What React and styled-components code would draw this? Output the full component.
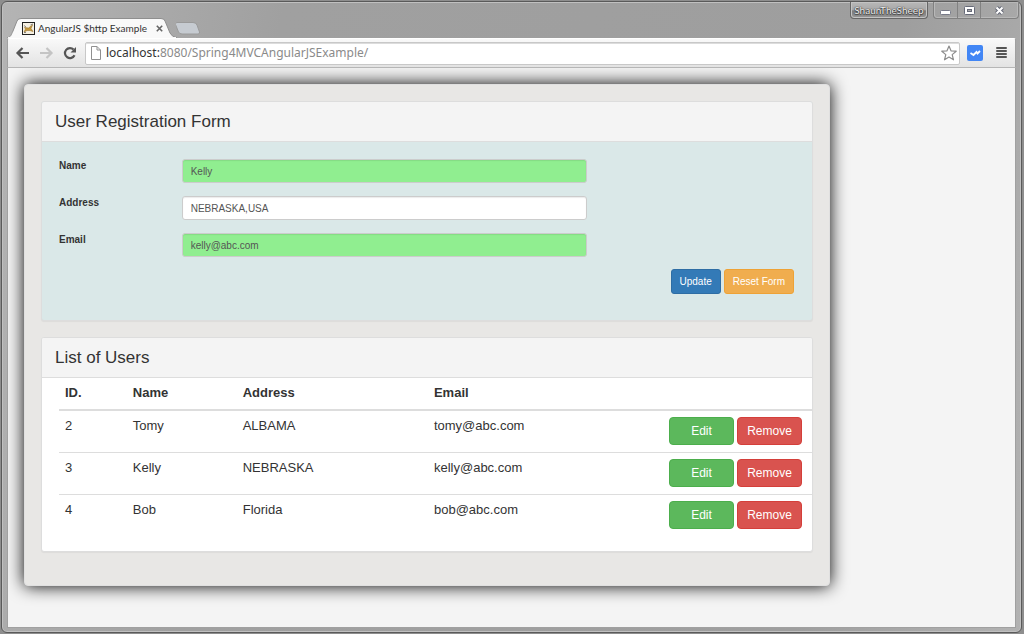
import React, { useState } from 'react';
import styled, { createGlobalStyle } from 'styled-components';

const GlobalStyle = createGlobalStyle`
    * {
        box-sizing: border-box;
    }
    body {
        margin: 0;
        background: #8e8e8e;
        color: #333;
        font-family: 'Liberation Sans', Arial, sans-serif;
    }
    button,
    input {
        font-family: inherit;
    }
`;

const CHROME_FONT = "Lato, 'Noto Sans', sans-serif";
const URL_FONT = "'Noto Sans', 'Open Sans', sans-serif";

/* browser window */

const Screen = styled.div`
    display: flex;
    min-height: 100vh;
    padding: 1px 2px 1px 1px;
`;

const Window = styled.div`
    flex: 1;
    min-width: 0;
    display: flex;
    flex-direction: column;
    padding: 0 5px 4px;
    border: 1px solid #5a5a5a;
    border-radius: 6px;
    background: linear-gradient(100deg, #b4b4b4 0, #a0a0a0 25%, #9e9e9e 80%, #b2b2b2 100%);
    box-shadow: inset 0 0 0 1px #c0c0c0;
`;

const TitleBar = styled.div`
    display: flex;
    justify-content: space-between;
    height: 36px;
`;

const Tabs = styled.div`
    display: flex;
    align-items: flex-end;
`;

const Tab = styled.div`
    position: relative;
    display: flex;
    align-items: center;
    width: 169px;
    height: 20px;
    padding: 0 11px 0 15px;
    font: 10px/20px ${CHROME_FONT};
    white-space: nowrap;
`;

const TabShape = styled.svg`
    position: absolute;
    top: 0;
    left: 0;
`;

const TabTitle = styled.span`
    position: relative;
    flex: 1;
    margin-left: 3px;
`;

const TabIcon = styled.svg`
    position: relative;
`;

const TabClose = styled.button`
    position: relative;
    display: flex;
    padding: 2px;
    border: 0;
    background: none;
`;

const NewTab = styled.button`
    height: 20px;
    padding: 0;
    border: 0;
    background: none;
`;

const Caption = styled.div`
    display: flex;
    gap: 5px;
    height: 17px;
    margin-right: -3px;
`;

const Profile = styled.button`
    width: 78px;
    padding: 0;
    border: 1px solid #666;
    border-top: 0;
    border-radius: 0 0 4px 4px;
    background: linear-gradient(#b8b8b8 0, #a8a8a8 50%, #7c7c7c 55%, #989898 100%);
    box-shadow: inset 0 0 0 1px #c4c4c4;
    color: #eee;
    font: 10px/17px ${CHROME_FONT};
    text-shadow: 0 0 1px #333, 0 0 1px #333, 0 1px 1px #444;
`;

const WindowButtons = styled.div`
    display: flex;
    border: 1px solid #808080;
    border-top: 0;
    border-radius: 0 0 4px 4px;
    box-shadow: inset 0 0 0 1px #b8b8b8;
`;

const WindowButton = styled.button`
    display: flex;
    align-items: center;
    justify-content: center;
    width: ${props => props.$wide ? '38px' : '23px'};
    padding: 0;
    border: 0;
    background: none;

    & + & {
        border-left: 1px solid #828282;
    }
`;

const Toolbar = styled.div`
    display: flex;
    align-items: center;
    gap: 7px;
    height: 30px;
    padding: 0 8px 0 7px;
    border: 1px solid #a0a0a0;
    border-top-color: #fff;
    border-bottom-color: #b6b6b6;
    border-radius: 2px 2px 0 0;
    background: linear-gradient(#f9f9f9, #e3e3e3);
`;

const ToolButton = styled.button`
    display: flex;
    padding: 0;
    border: 0;
    background: none;
`;

const NavButtons = styled.div`
    display: flex;
    gap: 8px;
    padding-right: 1px;
`;

const AddressBar = styled.div`
    flex: 1;
    display: flex;
    align-items: center;
    gap: 4px;
    height: 23px;
    padding: 0 2px 0 4px;
    border: 1px solid #c8c8c8;
    border-radius: 2px;
    background: #fff;
    box-shadow: inset 0 1px 0 #dcdcdc;
`;

const Url = styled.div`
    flex: 1;
    color: #8a8a8a;
    font: 12px/20px ${URL_FONT};

    b {
        color: #333;
        font-weight: normal;
    }
`;

const Actions = styled.div`
    display: flex;
    gap: 12px;
`;

const Viewport = styled.main`
    flex: 1;
    overflow: hidden;
    padding: 16px;
    border: 1px solid #a0a0a0;
    border-top: 0;
    background: #f4f4f4;
`;

/* page */

const Card = styled.div`
    width: calc(80% + 26px);
    padding: 16px 16px 33px;
    border: 1px solid #e0e0e0;
    border-radius: 4px;
    background: #e8e7e5;
    box-shadow: 0 0 17px #000;
`;

const Panel = styled.section`
    border: 1px solid #ddd;
    border-radius: 3px;
    background: ${props => props.$tinted ? '#dae8e8' : '#fff'};
    box-shadow: 0 1px 1px rgba(0, 0, 0, 0.05);

    & + & {
        margin-top: 16px;
    }
`;

const PanelTitle = styled.h2`
    margin: 0;
    padding: 10px 13px;
    border-bottom: 1px solid #ddd;
    border-radius: 2px 2px 0 0;
    background: #f4f4f4;
    font-size: 17px;
    font-weight: normal;
    line-height: 19px;
`;

const Form = styled.form`
    padding: 17px 17px 26px;
`;

const Fields = styled.div`
    display: grid;
    gap: 13px;
`;

const Field = styled.div`
    display: grid;
    grid-template-columns: 2fr 7fr 3fr;
    height: 24px;
`;

const Label = styled.label`
    font-size: 10px;
    font-weight: bold;
    line-height: 13px;
`;

const TextInput = styled.input`
    min-width: 0;
    margin-right: 24px;
    padding: 0 8px;
    border: 1px solid #ccc;
    border-radius: 3px;
    background: ${props => props.$valid ? 'lightgreen' : '#fff'};
    box-shadow: inset 0 1px 1px rgba(0, 0, 0, 0.08);
    color: #555;
    font-size: 10px;
`;

const FormActions = styled.div`
    display: flex;
    justify-content: flex-end;
    gap: 3px;
    margin-top: 12px;
    padding-right: 1px;
`;

const colors = {
    primary: ['#337ab7', '#2e6da4'],
    warning: ['#f0ad4e', '#eea236'],
    success: ['#5cb85c', '#4cae4c'],
    danger: ['#d9534f', '#d43f3a'],
};

const Button = styled.button`
    height: 25px;
    padding: 0 8px;
    border: 1px solid ${props => colors[props.$kind][1]};
    border-radius: 3px;
    background: ${props => colors[props.$kind][0]};
    color: #fff;
    font-size: 10px;
`;

const RowButton = styled(Button)`
    width: 65px;
    height: 28px;
    padding: 0;
    border-radius: 4px;
    font-size: 12px;
`;

const TableWrap = styled.div`
    padding: 0 0 15px 17px;
`;

const Table = styled.table`
    width: 100%;
    border-collapse: collapse;
    table-layout: fixed;
    font-size: 13px;
    line-height: 18px;
    text-align: left;

    th {
        height: 32px;
        padding: 6px;
        border-bottom: 2px solid #ddd;
        vertical-align: top;
    }

    td {
        padding: 6px 6px 7px;
        vertical-align: top;
    }

    tr + tr td {
        border-top: 1px solid #ddd;
    }
`;

const RowActions = styled.div`
    display: flex;
    justify-content: flex-end;
    gap: 3px;
    padding-right: 4px;
`;

const users = [
    { id: 2, name: 'Tomy', address: 'ALBAMA', email: 'tomy@abc.com' },
    { id: 3, name: 'Kelly', address: 'NEBRASKA', email: 'kelly@abc.com' },
    { id: 4, name: 'Bob', address: 'Florida', email: 'bob@abc.com' },
];

const BrowserTab = () =>
    <Tab>
        <TabShape width="170" height="20" viewBox="0 0 170 20">
            <path
                d="M0 20 C4 19 4 17 6 13 L10 3 Q11 .5 14 .5 H154 Q157 .5 158 3 L163 15 Q165 19 170 20 Z"
                fill="#f9f9f9"
                stroke="#8f8f8f"
            />
            <path d="M1 20 H169" stroke="#f9f9f9" strokeWidth="2" />
        </TabShape>
        <TabIcon width="13" height="13" viewBox="0 0 13 13">
            <rect x=".5" y=".5" width="12" height="12" fill="#f6f0e2" stroke="#222" />
            <path d="M2 10 L3.500 7 L2.500 5.500 L6.500 6 L10.500 3 L9 6.500 L11 9.500 L8 8.500 L5 8.500 Z" fill="#c79a3c" stroke="#9a7430" strokeWidth=".6" />
            <path d="M2 3.500 L4 5 M8.500 3 L11 2 M2 10.500 H4" stroke="#555" strokeWidth=".7" />
        </TabIcon>
        <TabTitle>AngularJS $http Example</TabTitle>
        <TabClose aria-label="Close tab">
            <svg width="7" height="7" viewBox="0 0 7 7" stroke="#666" strokeWidth="1.6">
                <path d="M.8 .8 L6.2 6.2 M6.2 .8 L.8 6.2" />
            </svg>
        </TabClose>
    </Tab>;

const BrowserTop = () =>
    <TitleBar>
        <Tabs>
            <BrowserTab />
            <NewTab aria-label="New tab">
                <svg width="26" height="20" viewBox="0 0 26 20">
                    <path
                        d="M1 4.500 H17 Q20 4.500 21 7 L23.500 14 Q24 16 22 16 H6 Q3.500 16 2.500 14 L-.5 6.500 Q-1 4.500 1 4.500 Z"
                        fill="#c6cbd1"
                        stroke="#9a9a9a"
                    />
                </svg>
            </NewTab>
        </Tabs>
        <Caption>
            <Profile>ShaunTheSheep</Profile>
            <WindowButtons>
                <WindowButton aria-label="Minimize">
                    <svg width="11" height="9" viewBox="0 0 11 9">
                        <rect x=".5" y="4.500" width="10" height="4" rx="1" fill="#fff" stroke="#777a88" />
                    </svg>
                </WindowButton>
                <WindowButton aria-label="Maximize">
                    <svg width="11" height="9" viewBox="0 0 11 9">
                        <rect x=".5" y=".5" width="10" height="8" rx="1" fill="#fff" stroke="#666a78" />
                        <rect x="3.500" y="3.500" width="4" height="2" fill="#aaa" stroke="#666a78" />
                    </svg>
                </WindowButton>
                <WindowButton $wide aria-label="Close">
                    <svg width="11" height="9" viewBox="0 0 11 9">
                        <path d="M2.500 1.500 L8.500 7.500 M8.500 1.500 L2.500 7.500" stroke="#666a78" strokeWidth="4" />
                        <path d="M2.500 1.500 L8.500 7.500 M8.500 1.500 L2.500 7.500" stroke="#fff" strokeWidth="2" />
                    </svg>
                </WindowButton>
            </WindowButtons>
        </Caption>
    </TitleBar>;

const Arrow = ({ color, flip }) =>
    <svg width="16" height="14" viewBox="0 0 16 14" fill="none" stroke={color} strokeWidth="2.200">
        <path d={flip ? 'M1 7 H12 M7.500 2 L12.500 7 L7.500 12' : 'M14 7 H3 M7.500 2 L2.500 7 L7.500 12'} />
    </svg>;

const BrowserToolbar = () =>
    <Toolbar>
        <NavButtons>
            <ToolButton aria-label="Back"><Arrow color="#555" /></ToolButton>
            <ToolButton aria-label="Forward"><Arrow color="#c4c4c4" flip /></ToolButton>
            <ToolButton aria-label="Reload">
                <svg width="14" height="14" viewBox="0 0 14 14">
                    <path d="M11.500 9.200 A5 5 0 1 1 10.600 3.600" fill="none" stroke="#555" strokeWidth="2.200" />
                    <path d="M13 1 V6.500 H7.500 Z" fill="#555" />
                </svg>
            </ToolButton>
        </NavButtons>
        <AddressBar>
            <svg width="12" height="14" viewBox="0 0 12 14" fill="#fff" stroke="#909090">
                <path d="M1.500 .5 H7 L10.500 4 V13.500 H1.500 Z M7 .5 V4 H10.500" />
            </svg>
            <Url><b>localhost:</b>8080/Spring4MVCAngularJSExample/</Url>
            <ToolButton aria-label="Bookmark">
                <svg width="16" height="16" viewBox="0 0 16 16" fill="#fff" stroke="#8c8c8c" strokeWidth="1.200" strokeLinejoin="round">
                    <path d="M8 1 L10 5.800 L15.200 6.200 L11.200 9.600 L12.500 14.800 L8 12 L3.500 14.800 L4.800 9.600 L.8 6.200 L6 5.800 Z" />
                </svg>
            </ToolButton>
        </AddressBar>
        <Actions>
            <ToolButton aria-label="Extension">
                <svg width="16" height="16" viewBox="0 0 16 16">
                    <rect width="16" height="16" rx="2" fill="#4286f5" />
                    <path d="M3.500 8 L6.500 10 L9.500 7 L10.500 8.500 L13 6" fill="none" stroke="#fff" strokeWidth="1.800" />
                </svg>
            </ToolButton>
            <ToolButton aria-label="Menu">
                <svg width="12" height="16" viewBox="0 0 12 16" fill="#555">
                    <rect x="1" y="2" width="11" height="2" rx="1" />
                    <rect x="1" y="5" width="11" height="2" rx="1" />
                    <rect x="1" y="8" width="11" height="2" rx="1" />
                    <rect x="1" y="11" width="11" height="2" rx="1" />
                </svg>
            </ToolButton>
        </Actions>
    </Toolbar>;

const emptyUser = { name: '', address: '', email: '' };

const UserForm = () => {
    const [user, setUser] = useState({ name: 'Kelly', address: 'NEBRASKA,USA', email: 'kelly@abc.com' });
    const onChange = field => e => setUser({ ...user, [field]: e.target.value });

    return (
        <Form onSubmit={e => e.preventDefault()}>
            <Fields>
                <Field>
                    <Label htmlFor="name">Name</Label>
                    <TextInput id="name" $valid value={user.name} onChange={onChange('name')} />
                </Field>
                <Field>
                    <Label htmlFor="address">Address</Label>
                    <TextInput id="address" value={user.address} onChange={onChange('address')} />
                </Field>
                <Field>
                    <Label htmlFor="email">Email</Label>
                    <TextInput id="email" $valid value={user.email} onChange={onChange('email')} />
                </Field>
            </Fields>
            <FormActions>
                <Button $kind="primary" type="submit">Update</Button>
                <Button $kind="warning" type="button" onClick={() => setUser(emptyUser)}>Reset Form</Button>
            </FormActions>
        </Form>
    );
};

const UserTable = () =>
    <TableWrap>
        <Table>
            <colgroup>
                <col width="9%" />
                <col width="14.6%" />
                <col width="25.4%" />
                <col width="27%" />
                <col width="24%" />
            </colgroup>
            <thead>
                <tr>
                    <th>ID.</th>
                    <th>Name</th>
                    <th>Address</th>
                    <th>Email</th>
                    <th />
                </tr>
            </thead>
            <tbody>
                {users.map(user =>
                    <tr key={user.id}>
                        <td>{user.id}</td>
                        <td>{user.name}</td>
                        <td>{user.address}</td>
                        <td>{user.email}</td>
                        <td>
                            <RowActions>
                                <RowButton $kind="success">Edit</RowButton>
                                <RowButton $kind="danger">Remove</RowButton>
                            </RowActions>
                        </td>
                    </tr>
                )}
            </tbody>
        </Table>
    </TableWrap>;

const App = () =>
    <Screen>
        <GlobalStyle />
        <Window>
            <BrowserTop />
            <BrowserToolbar />
            <Viewport>
                <Card>
                    <Panel $tinted>
                        <PanelTitle>User Registration Form</PanelTitle>
                        <UserForm />
                    </Panel>
                    <Panel>
                        <PanelTitle>List of Users</PanelTitle>
                        <UserTable />
                    </Panel>
                </Card>
            </Viewport>
        </Window>
    </Screen>;

export default App;
